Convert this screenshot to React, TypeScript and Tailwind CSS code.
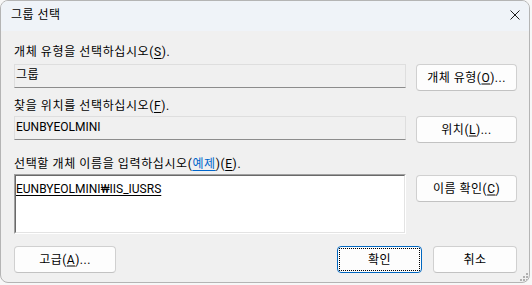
import React from "react"

// Windows 스타일 "그룹 선택" 대화 상자

function Mn({ children }: { children: React.ReactNode }) {
  // 니모닉 문자 밑줄
  return <span className="underline underline-offset-[2px]">{children}</span>
}

function WinButton({
  children,
  className = "",
  isDefault = false,
}: {
  children: React.ReactNode
  className?: string
  isDefault?: boolean
}) {
  return (
    <button
      className={
        "relative flex h-[27px] items-center justify-center rounded-[4px] border bg-[#fdfdfd] text-[12px] leading-4 tracking-[0.5px] text-black " +
        (isDefault ? "border-[#0067c0] " : "border-[#d0d0d0] border-b-[#c2c2c2] ") +
        className
      }
    >
      {isDefault && <span className="pointer-events-none absolute inset-[1px] border border-dotted border-black" />}
      <span className="relative -translate-y-[0.5px]">{children}</span>
    </button>
  )
}

function ReadOnlyBox({ value, korean = false }: { value: string; korean?: boolean }) {
  return (
    <div
      className={
        "h-[24px] w-[392px] border border-[#dedede] border-b-[#8c8c8c] bg-[#f0f0f0] px-[1px] pt-[2px] text-[12px] leading-4 " +
        (korean ? "tracking-[0.5px]" : "")
      }
    >
      {value}
    </div>
  )
}

export default function App() {
  return (
    <div className="h-[285px] w-[532px] bg-[#f7f7f7] font-['Roboto','Noto_Sans_CJK_KR',sans-serif] text-black">
      <div className="relative flex h-[283px] w-[530px] flex-col overflow-hidden rounded-[8px] border border-[#b4b4b4] bg-[#f0f0f0]">
        {/* 제목 표시줄 */}
        <div className="flex h-[30px] shrink-0 items-center justify-between bg-[#eff3f8] pl-[10px] pr-[9px]">
          <span className="-translate-y-[1px] text-[12px] leading-4 tracking-[0.5px]">그룹 선택</span>
          <svg width="10" height="10" viewBox="0 0 10 10" className="-translate-y-[1px]">
            <path d="M0.5 0.5 L9.5 9.5 M9.5 0.5 L0.5 9.5" stroke="#1b1b1b" strokeWidth="1" fill="none" />
          </svg>
        </div>

        {/* 본문 */}
        <div className="flex flex-col pl-[13px] pr-[12px] text-[12px] leading-4">
          <div className="mt-[13px] h-4 tracking-[0.6px]">
            개체 유형을 선택하십시오(<Mn>S</Mn>).
          </div>
          <div className="mt-[4px] flex gap-[10px]">
            <ReadOnlyBox value="그룹" korean />
            <WinButton className="w-[101px]">
              개체 유형(<Mn>O</Mn>)...
            </WinButton>
          </div>

          <div className="mt-[7px] h-4 tracking-[0.6px]">
            찾을 위치를 선택하십시오(<Mn>F</Mn>).
          </div>
          <div className="mt-[2px] flex gap-[10px]">
            <ReadOnlyBox value="EUNBYEOLMINI" />
            <WinButton className="w-[101px]">
              위치(<Mn>L</Mn>)...
            </WinButton>
          </div>

          <div className="mt-[13px] h-4 tracking-[0.6px]">
            선택할 개체 이름을 입력하십시오(
            <span className="text-[#0066cc] underline underline-offset-[2px]">예제</span>)(<Mn>E</Mn>).
          </div>
          <div className="mt-[2px] flex items-start gap-[10px]">
            <div className="h-[60px] w-[392px] border border-t-[#a0a0a0] border-l-[#a0a0a0] border-r-white border-b-white">
              <div className="h-full w-full border border-t-[#696969] border-l-[#696969] border-r-[#e3e3e3] border-b-[#e3e3e3] bg-white pt-[5px]">
                <span className="underline underline-offset-[2px]">EUNBYEOLMINI₩IIS_IUSRS</span>
              </div>
            </div>
            <WinButton className="mt-[1px] w-[101px]">
              이름 확인(<Mn>C</Mn>)
            </WinButton>
          </div>

          <div className="mt-[12px] flex">
            <WinButton className="w-[102px]">
              고급(<Mn>A</Mn>)...
            </WinButton>
            <WinButton isDefault className="ml-auto w-[85px]">
              확인
            </WinButton>
            <WinButton className="ml-[11px] w-[84px]">취소</WinButton>
          </div>
        </div>

        {/* 크기 조정 그립 */}
        <svg width="10" height="10" viewBox="0 0 10 10" className="absolute bottom-0 right-0">
          <g fill="#b0b0b0">
            <rect x="7" y="1" width="2" height="2" />
            <rect x="4" y="4" width="2" height="2" />
            <rect x="7" y="4" width="2" height="2" />
            <rect x="1" y="7" width="2" height="2" />
            <rect x="4" y="7" width="2" height="2" />
            <rect x="7" y="7" width="2" height="2" />
          </g>
        </svg>
      </div>
    </div>
  )
}
